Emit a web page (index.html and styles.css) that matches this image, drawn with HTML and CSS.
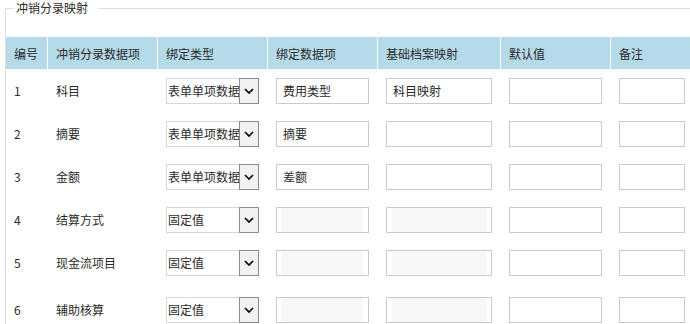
FILE: index.html
```html
<!DOCTYPE html>
<html lang="zh-CN">
<head>
  <meta charset="UTF-8">
  <meta name="viewport" content="width=device-width, initial-scale=1.0">
  <title>冲销分录映射</title>
  <link rel="stylesheet" href="styles.css">
</head>
<body>
  <fieldset class="mapping">
    <legend>冲销分录映射</legend>
    <table class="map-table">
      <colgroup>
        <col class="c-no">
        <col class="c-item">
        <col class="c-type">
        <col class="c-data">
        <col class="c-base">
        <col class="c-default">
        <col class="c-note">
      </colgroup>
      <thead>
        <tr>
          <th>编号</th>
          <th>冲销分录数据项</th>
          <th>绑定类型</th>
          <th>绑定数据项</th>
          <th>基础档案映射</th>
          <th>默认值</th>
          <th>备注</th>
        </tr>
      </thead>
      <tbody>
        <tr>
          <td>1</td>
          <td>科目</td>
          <td>
            <div class="select">
              <span class="select-text">表单单项数据</span>
              <span class="select-btn"><svg width="10" height="6" viewBox="0 0 10 6"><path d="M1 1 L5 5 L9 1" fill="none" stroke="#000" stroke-width="1.7"/></svg></span>
            </div>
          </td>
          <td><input class="field" type="text" value="费用类型"></td>
          <td><input class="field wide" type="text" value="科目映射"></td>
          <td><input class="field" type="text"></td>
          <td><input class="field small" type="text"></td>
        </tr>
        <tr>
          <td>2</td>
          <td>摘要</td>
          <td>
            <div class="select">
              <span class="select-text">表单单项数据</span>
              <span class="select-btn"><svg width="10" height="6" viewBox="0 0 10 6"><path d="M1 1 L5 5 L9 1" fill="none" stroke="#000" stroke-width="1.7"/></svg></span>
            </div>
          </td>
          <td><input class="field" type="text" value="摘要"></td>
          <td><input class="field wide" type="text"></td>
          <td><input class="field" type="text"></td>
          <td><input class="field small" type="text"></td>
        </tr>
        <tr>
          <td>3</td>
          <td>金额</td>
          <td>
            <div class="select">
              <span class="select-text">表单单项数据</span>
              <span class="select-btn"><svg width="10" height="6" viewBox="0 0 10 6"><path d="M1 1 L5 5 L9 1" fill="none" stroke="#000" stroke-width="1.7"/></svg></span>
            </div>
          </td>
          <td><input class="field" type="text" value="差额"></td>
          <td><input class="field wide" type="text"></td>
          <td><input class="field" type="text"></td>
          <td><input class="field small" type="text"></td>
        </tr>
        <tr>
          <td>4</td>
          <td>结算方式</td>
          <td>
            <div class="select">
              <span class="select-text">固定值</span>
              <span class="select-btn"><svg width="10" height="6" viewBox="0 0 10 6"><path d="M1 1 L5 5 L9 1" fill="none" stroke="#000" stroke-width="1.7"/></svg></span>
            </div>
          </td>
          <td><input class="field locked" type="text" disabled></td>
          <td><input class="field wide locked" type="text" disabled></td>
          <td><input class="field" type="text"></td>
          <td><input class="field small" type="text"></td>
        </tr>
        <tr>
          <td>5</td>
          <td>现金流项目</td>
          <td>
            <div class="select">
              <span class="select-text">固定值</span>
              <span class="select-btn"><svg width="10" height="6" viewBox="0 0 10 6"><path d="M1 1 L5 5 L9 1" fill="none" stroke="#000" stroke-width="1.7"/></svg></span>
            </div>
          </td>
          <td><input class="field locked" type="text" disabled></td>
          <td><input class="field wide locked" type="text" disabled></td>
          <td><input class="field" type="text"></td>
          <td><input class="field small" type="text"></td>
        </tr>
        <tr class="last">
          <td>6</td>
          <td>辅助核算</td>
          <td>
            <div class="select">
              <span class="select-text">固定值</span>
              <span class="select-btn"><svg width="10" height="6" viewBox="0 0 10 6"><path d="M1 1 L5 5 L9 1" fill="none" stroke="#000" stroke-width="1.7"/></svg></span>
            </div>
          </td>
          <td><input class="field locked" type="text" disabled></td>
          <td><input class="field wide locked" type="text" disabled></td>
          <td><input class="field" type="text"></td>
          <td><input class="field small" type="text"></td>
        </tr>
      </tbody>
    </table>
  </fieldset>
</body>
</html>
```

FILE: styles.css
```css
body {
  margin: 0;
  overflow: hidden;
  font-family: "Noto Sans CJK SC", "Liberation Sans", sans-serif;
  font-size: 12px;
  color: #2b2b2b;
  background: #fff;
}
.mapping {
  margin: 0 0 0 5px;
  padding: 21px 0 0 0;
  border: 1px solid #dedede;
  width: 720px;
  min-width: 0;
}
.mapping legend {
  padding: 0 11px 0 3px;
  margin-left: 7px;
  line-height: 16px;
}
.map-table {
  table-layout: fixed;
  width: 694px;
  border-collapse: separate;
  border-spacing: 0;
}
.c-no { width: 41px; }
.c-item { width: 110px; }
.c-type { width: 110px; }
.c-data { width: 110px; }
.c-base { width: 123px; }
.c-default { width: 110px; }
.c-note { width: 90px; }
.map-table th {
  height: 32px;
  padding: 0 8px;
  text-align: left;
  font-weight: normal;
  background-color: #b5dae9;
  white-space: nowrap;
}
.map-table th + th {
  border-left: 1px solid #fff;
}
.map-table td {
  height: 43px;
  padding: 0 8px;
  vertical-align: middle;
  white-space: nowrap;
}
.map-table td + td {
  border-left: 1px solid transparent;
}
.map-table tr.last td {
  padding-top: 4px;
}
/* fake select box like the old browser control */
.select {
  display: flex;
  align-items: stretch;
  width: 93px;
  height: 26px;
  box-sizing: border-box;
  border: 1px solid #d6d6d6;
  border-right: none;
}
.select-text {
  flex: 1;
  overflow: hidden;
  white-space: nowrap;
  line-height: 24px;
  padding-left: 1px;
}
.select-btn {
  width: 20px;
  margin: -1px 0;
  box-sizing: border-box;
  border: 1px solid #8c8c8c;
  background-color: #f2f2f2;
  display: flex;
  align-items: center;
  justify-content: center;
}
.field {
  display: block;
  width: 93px;
  height: 26px;
  box-sizing: border-box;
  margin: 0;
  padding: 0 6px;
  border: 1px solid #cbcbcb;
  font: inherit;
  color: #2b2b2b;
  background: #fff;
  outline: none;
}
.field.wide {
  width: 106px;
}
.field.small {
  width: 66px;
}
.field.locked {
  padding: 0 5px;
  background-color: #f7f7f7;
  background-clip: content-box;
}
```
